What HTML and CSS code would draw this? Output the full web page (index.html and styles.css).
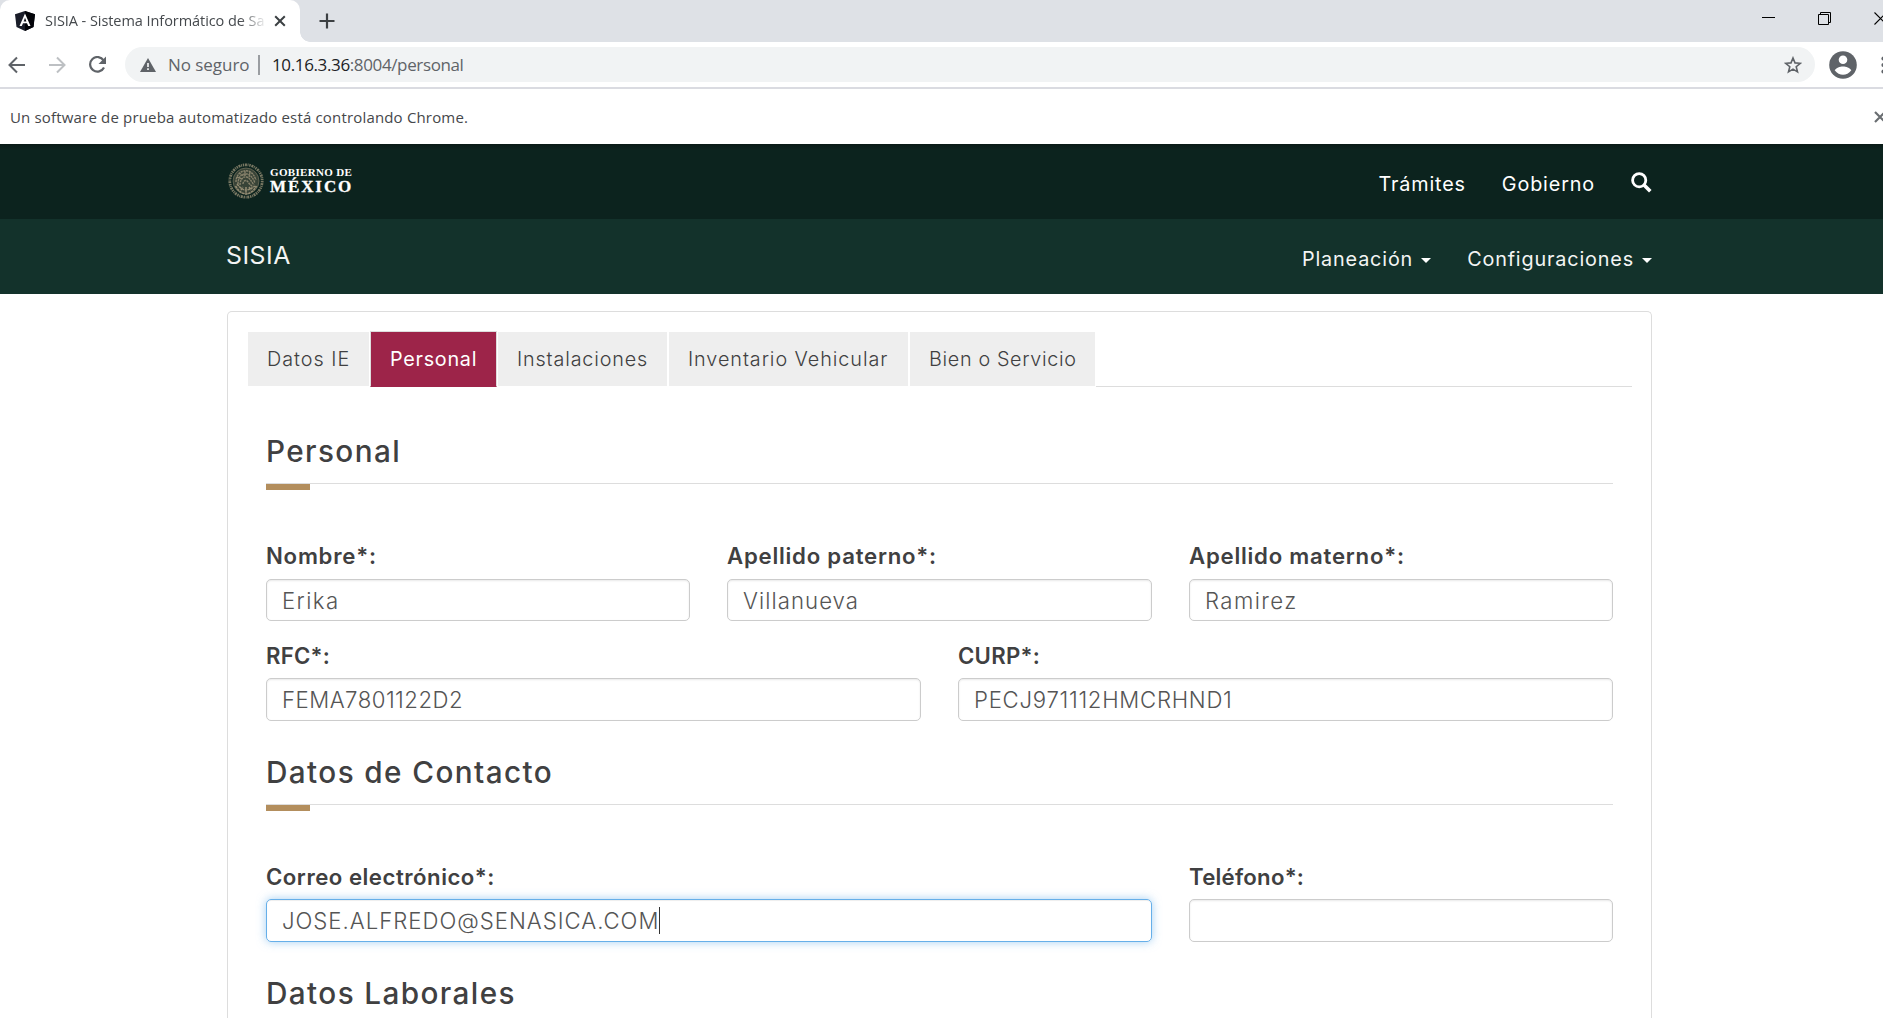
FILE: index.html
```html
<!DOCTYPE html>
<html lang="es">
<head>
<meta charset="utf-8">
<title>SISIA - Sistema Informático de Sanidad</title>
<link rel="stylesheet" href="styles.css">
</head>
<body>
<div class="tabstrip">
  <div class="browser-tab">
    <svg class="favicon" width="20" height="20" viewBox="0 0 20 20"><path d="M10 0 20 3.3 18.500 16 10 20 1.500 16 0 3.300Z" fill="#1a1d29"/><path d="M10 0 20 3.300 18.500 16 10 20Z" fill="#020308"/><path d="M10 2.500 4.500 15H6.800L8 12.200H12L13.200 15H15.500ZM10 6.800 11.400 10.400H8.600Z" fill="#fff" fill-rule="evenodd"/></svg>
    <span class="browser-tab-title">SISIA - Sistema Informático de Sa</span>
    <svg width="12" height="12" viewBox="0 0 12 12"><path d="M1.200 1.200 10.800 10.800M10.800 1.200 1.200 10.800" stroke="#3c4043" stroke-width="2"/></svg>
  </div>
  <div class="tab-curve"></div>
  <svg class="new-tab" width="16" height="16" viewBox="0 0 16 16"><path d="M8 .5V15.500M.5 8H15.500" stroke="#3c4043" stroke-width="2.200"/></svg>
  <div class="window-controls">
    <svg width="13" height="13" viewBox="0 0 13 13"><path d="M0 5.500H13" stroke="#000"/></svg>
    <svg width="13" height="13" viewBox="0 0 13 13" fill="none" stroke="#000"><path d="M.5 2.500H10.500V12.500H.5ZM2.500 2.500V.5H12.500V10.500H10.500"/></svg>
    <svg width="13" height="13" viewBox="0 0 13 13"><path d="M.5 .5 12.500 12.500M12.500 .5 .5 12.500" stroke="#000" stroke-width="1.100"/></svg>
  </div>
</div>

<div class="toolbar">
  <svg class="back" width="18" height="18" viewBox="0 0 18 18" fill="none" stroke="#5f6368" stroke-width="2"><path d="M17 9H2M9 1.500 1.500 9 9 16.500"/></svg>
  <svg class="forward" width="18" height="18" viewBox="0 0 18 18" fill="none" stroke="#bdc0c3" stroke-width="2"><path d="M1 9H16M9 1.500 16.500 9 9 16.500"/></svg>
  <svg class="reload" width="19" height="18" viewBox="0 0 19 18"><path d="M15.600 4.400A7.300 7.300 0 1 0 16 11.500" fill="none" stroke="#5f6368" stroke-width="2.200"/><path d="M18 .5V8H10.500Z" fill="#5f6368"/></svg>
  <div class="omnibox">
    <svg class="warning" width="16" height="14" viewBox="0 0 16 14"><path d="M8 0 16 14H0Z" fill="#5f6368"/><path d="M8 5V9M8 10.300V12" stroke="#f1f3f4" stroke-width="1.700"/></svg>
    <span class="insecure">No seguro</span>
    <span class="separator"></span>
    <span class="url"><b>10.16.3.36</b>:8004/personal</span>
    <svg class="star" width="18" height="18" viewBox="0 0 18 18" fill="none" stroke="#5f6368" stroke-width="1.600"><path d="M9 2 11 6.900 16.300 7.300 12.200 10.700 13.500 15.900 9 13.100 4.500 15.900 5.800 10.700 1.700 7.300 7 6.900Z"/></svg>
  </div>
  <svg class="avatar" width="28" height="28" viewBox="0 0 28 28"><circle cx="14" cy="14" r="13.800" fill="#5f6368"/><circle cx="14" cy="8.700" r="4.300" fill="#fff"/><path d="M5.700 19.300C7 16.700 11 15.400 14 15.400S21 16.700 22.300 19.300C20 22.500 17 23.700 14 23.700S8 22.500 5.700 19.300Z" fill="#fff"/></svg>
  <svg class="menu" width="5" height="18" viewBox="0 0 5 18" fill="#5f6368"><circle cx="2.500" cy="2.500" r="2.100"/><circle cx="2.500" cy="9" r="2.100"/><circle cx="2.500" cy="15.500" r="2.100"/></svg>
</div>

<div class="infobar">
  <span>Un software de prueba automatizado está controlando Chrome.</span>
  <svg width="12" height="12" viewBox="0 0 12 12"><path d="M1 1 11 11M11 1 1 11" stroke="#6a6e72" stroke-width="2.200"/></svg>
</div>

<header class="gov-bar">
  <svg class="seal" width="36" height="36" viewBox="0 0 36 36" fill="none" stroke="#958d74">
    <circle cx="18" cy="18" r="13" fill="#4b5142" stroke="none" opacity=".7"/>
    <circle cx="18" cy="18" r="16.200" stroke-width="2.800" stroke-dasharray="1.400 .8 2 .7 .9 .8" opacity=".8"/>
    <circle cx="18" cy="18" r="13" stroke-width=".8" opacity=".6"/>
    <path d="M8 19C8 11 14 6.500 20 8C24 9 26 12 28 17M10 21C10 14 14 10 19 11C23 12 25 15 27 20M12 22C12 17 15 13 18.500 14C22 15 23 18 26 22M15 21C15 18 18 16 20 19S24 23 25 24M9 14 14 16M11 10 16 13M17 8V13M22 9 21 15" stroke-width="1.400" stroke-dasharray="2.200 .6" opacity=".85"/>
    <path d="M7.500 23C11 29 15 31 18 31S25 29 28.500 23M9 21C13 26 16 27 18 27S23 26 27 23M13 27 15 24M21 24 23 27M18 24V30" stroke-width="1.500" stroke-dasharray="2.500 .7"/>
  </svg>
  <div class="wordmark"><span class="wordmark-top">GOBIERNO DE</span><span class="wordmark-main">MÉXICO</span></div>
  <nav class="gov-nav">
    <a>Trámites</a>
    <a>Gobierno</a>
    <svg class="search" width="21" height="21" viewBox="0 0 21 21" fill="none" stroke="#fff"><circle cx="8.200" cy="8.200" r="6.600" stroke-width="2.800"/><path d="M12.800 12.800 19.300 19.300" stroke-width="3.600"/></svg>
  </nav>
</header>

<div class="app-bar">
  <span class="brand">SISIA</span>
  <nav class="app-nav">
    <a>Planeación<i class="caret"></i></a>
    <a>Configuraciones<i class="caret"></i></a>
  </nav>
</div>

<main class="panel">
  <ul class="tabs">
    <li class="tab tab-ie">Datos IE</li>
    <li class="tab tab-active">Personal</li>
    <li class="tab tab-inst">Instalaciones</li>
    <li class="tab tab-veh">Inventario Vehicular</li>
    <li class="tab tab-serv">Bien o Servicio</li>
    <li class="tabs-rest"></li>
  </ul>

  <form class="form">
    <h3 class="heading">Personal</h3>
    <div class="row row-first">
      <div class="group"><label>Nombre*:</label><div class="field field-short name">Erika</div></div>
      <div class="group"><label>Apellido paterno*:</label><div class="field field-short">Villanueva</div></div>
      <div class="group"><label>Apellido materno*:</label><div class="field field-short name">Ramirez</div></div>
    </div>
    <div class="row row-ids">
      <div class="group"><label class="tight">RFC*:</label><div class="field rfc">FEMA7801122D2</div></div>
      <div class="group"><label class="tight">CURP*:</label><div class="field curp">PECJ971112HMCRHND1</div></div>
    </div>
    <h3 class="heading">Datos de Contacto</h3>
    <div class="row row-contact">
      <div class="group"><label class="mid">Correo electrónico*:</label><div class="field field-focus">JOSE.ALFREDO@SENASICA.COM<i class="cursor"></i></div></div>
      <div class="group"><label class="tight">Teléfono*:</label><div class="field"></div></div>
    </div>
    <h3 class="heading heading-last">Datos Laborales</h3>
  </form>
</main>
</body>
</html>
```
FILE: styles.css
```css
* { box-sizing: border-box; }
body {
  margin: 0;
  height: 1018px;
  overflow: hidden;
  background: #fff;
  color: #404041;
  font-family: Inter, "Liberation Sans", sans-serif;
}
svg { display: block; flex: none; }

/* Browser window */
.tabstrip, .toolbar, .infobar { display: flex; font-family: "Open Sans", "Noto Sans", sans-serif; }
.tabstrip { height: 42px; background: #dee1e6; }
.browser-tab {
  display: flex;
  align-items: center;
  width: 300px;
  height: 42px;
  padding-left: 15px;
  border-radius: 10px 10px 0 0;
  background: #fff;
}
.browser-tab-title {
  width: 220px;
  margin: 0 9px 0 10px;
  padding-bottom: 2px;
  overflow: hidden;
  white-space: nowrap;
  font-size: 14.500px;
  letter-spacing: -.06px;
  color: #45494d;
  -webkit-mask-image: linear-gradient(90deg, #000 195px, transparent 222px);
  mask-image: linear-gradient(90deg, #000 195px, transparent 222px);
}
.tab-curve {
  align-self: flex-end;
  width: 10px;
  height: 10px;
  background: radial-gradient(circle at 100% 0, transparent 9.500px, #fff 10px);
}
.new-tab { margin: 13px 0 0 9px; }
.window-controls { display: flex; gap: 43px; margin: 12px -4px 0 auto; }
.window-controls svg:first-child { margin-right: 0; }

.toolbar { align-items: center; height: 47px; padding-bottom: 0; border-bottom: 2px solid #dadbe1; }
.back { margin-left: 8px; }
.forward { margin-left: 22px; }
.reload { margin-left: 22px; }
.omnibox {
  display: flex;
  align-items: center;
  width: 1690px;
  flex: none;
  height: 35px;
  margin-left: 18px;
  padding: 0 13px 0 15px;
  border-radius: 18px;
  background: #f1f3f4;
  font-size: 17px;
  color: #5f6368;
  white-space: nowrap;
}
.insecure { width: 90px; margin-left: 12px; letter-spacing: -.05px; }
.separator { width: 2px; height: 20px; background: #9a9da1; }
.url { margin-left: 12px; letter-spacing: -.37px; }
.url b { font-weight: 400; color: #202124; }
.star { margin-left: auto; }
.avatar { margin-left: 14px; }
.menu { margin-left: 24px; }
.infobar {
  justify-content: space-between;
  align-items: center;
  height: 55px;
  padding-left: 10px;
  font-size: 15px;
  letter-spacing: .17px;
  color: #45474a;
}
.infobar svg { margin-right: -3px; }

/* Government header */
.gov-bar {
  display: flex;
  height: 75px;
  padding: 0 231px 0 228px;
  background: linear-gradient(#091a16, #0c231e 6px);
  color: #fff;
}
.seal { margin-top: 19px; }
.wordmark {
  display: flex;
  flex-direction: column;
  margin: 22px 0 0 6px;
  font-family: "Liberation Serif", serif;
  font-weight: 700;
}
.wordmark-top { font-size: 11px; line-height: 12px; letter-spacing: .34px; }
.wordmark-main { font-size: 17px; line-height: 18px; letter-spacing: 1.900px; -webkit-text-stroke: .3px #fff; }
.gov-nav, .app-nav { display: flex; align-items: flex-start; margin-left: auto; font-size: 19.800px; line-height: 24px; letter-spacing: .850px; }
.gov-nav { gap: 36px; padding-top: 28px; }

.app-bar {
  display: flex;
  height: 75px;
  padding: 0 231px 0 226px;
  background: #13322b;
  color: #f3f5f4;
}
.brand { margin-top: 21px; font-size: 24.800px; line-height: 30px; letter-spacing: .5px; }
.app-nav { gap: 36px; padding-top: 28px; }
.app-nav a { display: flex; align-items: center; }
.caret {
  margin: 3px 0 0 8px;
  border: 5px solid transparent;
  border-top-color: #fff;
  border-bottom: 0;
}

/* Content panel */
.panel {
  height: 707px;
  margin: 17px 231px 0 227px;
  padding: 20px 19px 0 20px;
  overflow: hidden;
  border: 1px solid #ddd;
  border-bottom: 0;
  border-radius: 5px 5px 0 0;
}
.tabs { display: flex; height: 55px; margin: 0; padding: 0; list-style: none; }
.tab {
  height: 54px;
  padding-left: 19px;
  background: #eee;
  font-size: 19.800px;
  font-weight: 300;
  line-height: 54px;
  letter-spacing: .850px;
  white-space: nowrap;
}
.tab-ie { width: 121px; letter-spacing: 1px; }
.tab-active {
  width: 127px;
  height: 56px;
  margin: -1px 1px 0;
  border: 1px solid #ddd;
  border-bottom-color: #9d2449;
  background: #9d2449;
  color: #fff;
  font-weight: 400;
  letter-spacing: .720px;
}
.tab-inst { width: 169px; }
.tab-veh { width: 239px; margin: 0 2px; letter-spacing: .930px; }
.tab-serv { width: 185px; letter-spacing: .650px; }
.tabs-rest { flex: 1; margin-left: 1px; border-bottom: 1px solid #ddd; }

.form { padding: 44px 19px 0 18px; }
.heading {
  height: 59px;
  margin: 0 0 51px;
  font-size: 29.700px;
  font-weight: 500;
  line-height: 40px;
  letter-spacing: 1.400px;
  background: linear-gradient(#b38e5d, #b38e5d) 0 53px / 44px 6px no-repeat, linear-gradient(#ddd, #ddd) 0 52px / 100% 1px no-repeat;
}
.heading-last { height: 45px; margin: 0; background: none; }
.row { display: grid; gap: 37px; }
.row-first { grid-template-columns: 424px 425px 424px; margin-bottom: 20px; }
.row-ids { grid-template-columns: 655px 655px; margin-bottom: 31px; }
.row-contact { grid-template-columns: 886px 424px; margin-bottom: 31px; }
label {
  display: block;
  height: 37px;
  font-size: 22.200px;
  font-weight: 600;
  line-height: 30px;
  letter-spacing: .760px;
}
.row-first label { height: 38px; }
label.tight { letter-spacing: .250px; }
label.mid { letter-spacing: .5px; }
.field {
  display: flex;
  align-items: center;
  height: 43px;
  padding: 0 0 1px 15px;
  border: 1px solid #ccc;
  border-radius: 5px;
  box-shadow: inset 0 1px 2px rgba(0, 0, 0, .09);
  font-size: 22.200px;
  font-weight: 300;
  letter-spacing: 1.050px;
  color: #555;
}
.field-short { height: 42px; padding-bottom: 0; }
.name { letter-spacing: 1.400px; }
.rfc { letter-spacing: .480px; }
.curp { letter-spacing: .720px; }
.field-focus {
  border-color: #66afe9;
  box-shadow: inset 0 1px 1px rgba(0, 0, 0, .07), 0 0 10px rgba(102, 175, 233, .6);
  letter-spacing: .980px;
}
.cursor { width: 1px; height: 27px; background: #333; }
```
